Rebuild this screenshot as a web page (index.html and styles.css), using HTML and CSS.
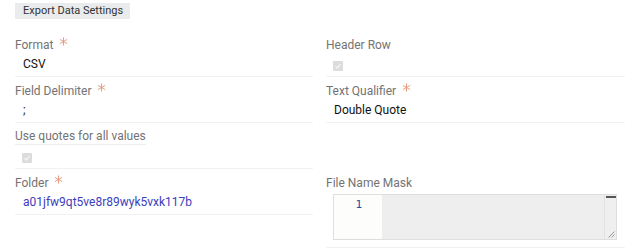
FILE: index.html
```html
<!DOCTYPE html>
<html lang="en">

<head>
  <meta charset="UTF-8">
  <meta name="viewport" content="width=device-width, initial-scale=1.0">
  <title>Export Data Settings</title>
  <link rel="stylesheet" href="styles.css">
</head>

<body>
  <div class="section-tab">Export Data Settings</div>

  <div class="settings-grid">
    <div class="field">
      <label class="field-label">Format <svg class="req" viewBox="0 0 10 10"><path d="M5 0.5V9.5M1 2.7L9 7.3M9 2.7L1 7.3" /></svg></label>
      <div class="field-value">CSV</div>
    </div>
    <div class="field">
      <label class="field-label">Header Row</label>
      <div class="check-wrap"><span class="check"><svg viewBox="0 0 10 10"><path d="M2.5 5.2L4.3 7L7.6 3" /></svg></span></div>
    </div>

    <div class="field">
      <label class="field-label">Field Delimiter <svg class="req" viewBox="0 0 10 10"><path d="M5 0.5V9.5M1 2.7L9 7.3M9 2.7L1 7.3" /></svg></label>
      <div class="field-value">;</div>
    </div>
    <div class="field">
      <label class="field-label">Text Qualifier <svg class="req" viewBox="0 0 10 10"><path d="M5 0.5V9.5M1 2.7L9 7.3M9 2.7L1 7.3" /></svg></label>
      <div class="field-value">Double Quote</div>
    </div>

    <div class="field">
      <label class="field-label underlined">Use quotes for all values</label>
      <div class="check-wrap"><span class="check"><svg viewBox="0 0 10 10"><path d="M2.5 5.2L4.3 7L7.6 3" /></svg></span></div>
    </div>
    <div class="field empty"></div>

    <div class="field">
      <label class="field-label">Folder <svg class="req" viewBox="0 0 10 10"><path d="M5 0.5V9.5M1 2.7L9 7.3M9 2.7L1 7.3" /></svg></label>
      <div class="field-value link">a01jfw9qt5ve8r89wyk5vxk117b</div>
    </div>
    <div class="field">
      <label class="field-label">File Name Mask</label>
      <div class="editor">
        <div class="gutter">1</div>
        <div class="code"></div>
        <div class="scrollbar"><span class="thumb"></span></div>
        <svg class="grip" viewBox="0 0 8 8"><path d="M7.5 1.5L1.5 7.5M7.5 4.5L4.5 7.5" /></svg>
      </div>
    </div>
  </div>
</body>

</html>
```

FILE: styles.css
```css
body {
  font-family: Roboto, "Liberation Sans", Arial, sans-serif;
  font-size: 12px;
  margin: 0;
  padding: 3px 14px 0 15px;
  background: #fff;
  color: #222;
}

.section-tab {
  display: inline-block;
  background-color: #e9ebec;
  color: #333;
  font-size: 11px;
  line-height: 16px;
  padding: 0 7px 0 8px;
}

.settings-grid {
  display: grid;
  grid-template-columns: 298px 299px;
  column-gap: 13px;
  align-items: start;
  margin-top: 12px;
}

.field {
  padding: 6px 0 4px;
  border-bottom: 1px solid #f2f2f2;
}

.field.empty {
  border-bottom: none;
}

.field-label {
  display: block;
  height: 16px;
  line-height: 16px;
  color: #737373;
}

.field-label.underlined {
  display: table;
  height: 15px;
  line-height: 15px;
  border-bottom: 1px solid #eeeeee;
}

.req {
  width: 9px;
  height: 9px;
  vertical-align: top;
  margin: 0 0 0 3px;
}

.req path {
  stroke: #e39372;
  stroke-width: 1;
  fill: none;
}

.field-value {
  margin-top: 3px;
  padding-left: 8px;
  height: 16px;
  line-height: 16px;
  color: #111;
}

.field-value.link {
  color: #3b3dbd;
}

.check-wrap {
  height: 11px;
  margin-top: 3px;
  padding: 5px 0 0 7px;
}

.check {
  display: block;
  width: 10px;
  height: 10px;
  background: #dcdcdc;
  border-radius: 1px;
}

.check svg {
  display: block;
  width: 10px;
  height: 10px;
}

.check path {
  stroke: #f4f4f4;
  stroke-width: 1.3;
  fill: none;
}

.editor {
  position: relative;
  display: flex;
  margin: 3px 8px 3px 7px;
  height: 44px;
  border: 1px solid #dedede;
  background: #eeeeee;
}

.gutter {
  width: 28px;
  padding: 3px 20px 0 0;
  background: #fdfdfb;
  text-align: right;
  font-family: "DejaVu Sans Mono", monospace;
  font-size: 11px;
  line-height: 14px;
  color: #1b4f9c;
}

.code {
  flex: 1;
}

.scrollbar {
  width: 11px;
  border-left: 1px solid #e2e2e2;
  background: #efefef;
}

.thumb {
  display: block;
  height: 2px;
  margin: 1px 0 0 1px;
  background: #555;
}

.grip {
  position: absolute;
  right: 1px;
  bottom: 1px;
  width: 8px;
  height: 8px;
}

.grip path {
  stroke: #999;
  stroke-width: 1;
  fill: none;
}
```
